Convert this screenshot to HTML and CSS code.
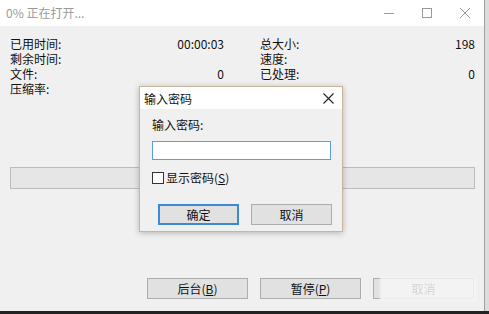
FILE: index.html
```html
<!DOCTYPE html>
<html lang="zh-CN">

<head>
    <meta charset="UTF-8">
    <title>0% 正在打开...</title>
    <link rel="stylesheet" href="styles.css">
</head>

<body>
    <div id="window">
        <div class="titlebar">
            <div class="title">0% 正在打开...</div>
            <div class="controls">
                <div class="ctrl">
                    <svg width="10" height="10" viewBox="0 0 10 10"><path d="M0 5.5H10" stroke="#999" stroke-width="1"/></svg>
                </div>
                <div class="ctrl">
                    <svg width="10" height="10" viewBox="0 0 10 10"><rect x="0.5" y="0.5" width="9" height="9" fill="none" stroke="#999"/></svg>
                </div>
                <div class="ctrl">
                    <svg width="10" height="10" viewBox="0 0 10 10"><path d="M0 0L10 10M10 0L0 10" stroke="#999" stroke-width="1"/></svg>
                </div>
            </div>
        </div>

        <div id="stats">
            <div class="stat"><span>已用时间:</span><span>00:00:03</span></div>
            <div class="stat"><span>总大小:</span><span>198</span></div>
            <div class="stat"><span>剩余时间:</span><span></span></div>
            <div class="stat"><span>速度:</span><span></span></div>
            <div class="stat"><span>文件:</span><span>0</span></div>
            <div class="stat"><span>已处理:</span><span>0</span></div>
            <div class="stat"><span>压缩率:</span><span></span></div>
            <div class="stat"><span></span><span></span></div>
        </div>

        <div id="progress"></div>

        <div id="bottom-buttons">
            <div class="btn wide">后台(<u>B</u>)</div>
            <div class="btn wide">暂停(<u>P</u>)</div>
            <div class="btn wide">取消</div>
        </div>
        <div class="watermark"></div>

        <div id="dialog">
            <div class="dlg-title">
                <span>输入密码</span>
                <svg width="11" height="11" viewBox="0 0 11 11"><path d="M0.5 0.5L10.5 10.5M10.5 0.5L0.5 10.5" stroke="#222" stroke-width="1.1"/></svg>
            </div>
            <div class="dlg-body">
                <div class="dlg-label">输入密码:</div>
                <div class="dlg-input"></div>
                <div class="dlg-check">
                    <span class="box"></span>
                    <span>显示密码(<u>S</u>)</span>
                </div>
                <div class="dlg-buttons">
                    <div class="btn small default">确定</div>
                    <div class="btn small">取消</div>
                </div>
            </div>
        </div>
    </div>
    <div id="bottom-edge"></div>
</body>

</html>
```

FILE: styles.css
```css
body {
    margin: 0;
    width: 489px;
    height: 314px;
    overflow: hidden;
    background-color: #dcdcdc;
    font-family: "Noto Sans CJK SC", "Liberation Sans", sans-serif;
    font-size: 12px;
    color: #111;
}

#window {
    position: relative;
    width: 484px;
    height: 311px;
    background-color: #f0f0f0;
    border-right: 1px solid #a0a0a0;
}

.titlebar {
    height: 26px;
    background-color: #fff;
    display: flex;
    justify-content: space-between;
    align-items: center;
}

.title {
    padding-left: 6px;
    color: #9a9a9a;
    line-height: 26px;
}

.controls {
    display: flex;
    height: 26px;
}

.ctrl {
    width: 38px;
    display: flex;
    justify-content: center;
    align-items: center;
}

#stats {
    display: grid;
    grid-template-columns: 214px 215px;
    column-gap: 36px;
    padding: 10px 0 0 10px;
}

.stat {
    display: flex;
    justify-content: space-between;
    height: 15px;
    line-height: 15px;
}

#progress {
    margin: 71px 0 0 10px;
    width: 463px;
    height: 20px;
    background-color: #e6e6e6;
    border: 1px solid #bcbcbc;
}

#bottom-buttons {
    display: flex;
    justify-content: flex-end;
    gap: 12px;
    margin-top: 89px;
    padding-right: 10px;
}

.btn {
    box-sizing: border-box;
    background-color: #e1e1e1;
    border: 1px solid #adadad;
    display: flex;
    justify-content: center;
    align-items: center;
    line-height: 14px;
}

.btn.wide {
    width: 101px;
    height: 21px;
}

.btn.small {
    width: 81px;
    height: 21px;
}

.btn.default {
    border: 2px solid #3c8ad6;
}

.watermark {
    position: absolute;
    left: 380px;
    top: 277px;
    width: 96px;
    height: 24px;
    background-color: rgba(246, 246, 246, 0.85);
    filter: blur(1px);
}

#dialog {
    position: absolute;
    left: 139px;
    top: 86px;
    width: 202px;
    height: 144px;
    background-color: #f0f0f0;
    border: 1px solid #c9b49c;
    box-shadow: 0 1px 6px rgba(0, 0, 0, 0.25);
}

.dlg-title {
    height: 22px;
    background-color: #fff;
    display: flex;
    justify-content: space-between;
    align-items: center;
    padding: 0 8px 0 4px;
}

.dlg-body {
    padding: 9px 0 0 12px;
}

.dlg-label {
    line-height: 14px;
}

.dlg-input {
    margin-top: 9px;
    width: 177px;
    height: 17px;
    background-color: #fff;
    border: 1px solid #5a9de0;
}

.dlg-check {
    display: flex;
    align-items: center;
    gap: 2px;
    margin-top: 11px;
    line-height: 14px;
}

.box {
    width: 10px;
    height: 10px;
    background-color: #fff;
    border: 1px solid #333;
}

.dlg-buttons {
    display: flex;
    gap: 12px;
    margin: 19px 0 0 6px;
}

#bottom-edge {
    height: 3px;
    background-color: #222;
}
```
